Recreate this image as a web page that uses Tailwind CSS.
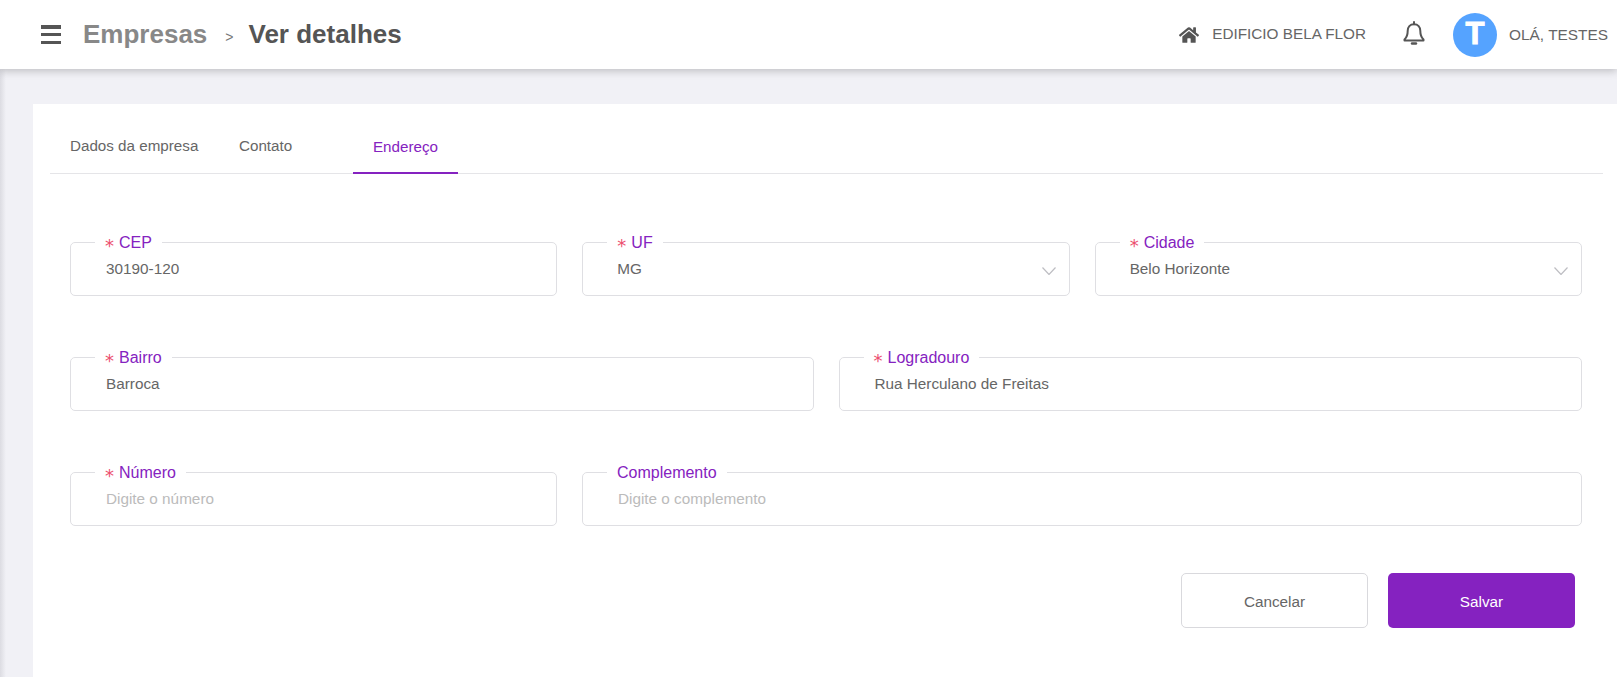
<!DOCTYPE html>
<html lang="en">

<head>
    <meta charset="UTF-8">
    <meta name="viewport" content="width=device-width, initial-scale=1.0">
    <title>Ver detalhes</title>
    <script src="https://cdn.jsdelivr.net/npm/@tailwindcss/browser@4"></script>
</head>

<body class="bg-[#f1f1f6] h-[677px] overflow-hidden flex flex-col font-['Liberation_Sans',Arial,sans-serif] text-[#666]">
    <!-- top bar -->
    <header class="relative z-10 h-[69px] shrink-0 bg-white shadow-[0_2px_8px_rgba(0,0,0,0.22)] flex items-center pl-[41px] pr-[9px]">
        <button class="w-5 h-[19px] flex flex-col justify-between mr-[22px]">
            <span class="block h-[3.5px] bg-[#555]"></span>
            <span class="block h-[3.5px] bg-[#555]"></span>
            <span class="block h-[3.5px] bg-[#555]"></span>
        </button>
        <span class="text-[26px] font-bold text-[#888]">Empresas</span>
        <span class="text-sm ml-[18px] mr-[15px] mt-[5px] text-[#777]">&gt;</span>
        <span class="text-[26px] font-bold text-[#555]">Ver detalhes</span>

        <div class="ml-auto flex items-center">
            <svg class="w-5 h-[18px] text-[#555] mr-[13px]" viewBox="0 0 576 512" fill="currentColor">
                <path d="M280.37 148.26L96 300.11V464a16 16 0 0 0 16 16l112.06-.29a16 16 0 0 0 15.92-16V368a16 16 0 0 1 16-16h64a16 16 0 0 1 16 16v95.64a16 16 0 0 0 16 16.05L464 480a16 16 0 0 0 16-16V300L295.67 148.26a12.19 12.19 0 0 0-15.3 0zM571.6 251.47L488 182.56V44.05a12 12 0 0 0-12-12h-56a12 12 0 0 0-12 12v72.61L318.47 43a48 48 0 0 0-61 0L4.34 251.47a12 12 0 0 0-1.6 16.9l25.5 31A12 12 0 0 0 45.15 301l235.22-193.74a12.19 12.19 0 0 1 15.3 0L530.9 301a12 12 0 0 0 16.9-1.6l25.5-31a12 12 0 0 0-1.7-16.93z"/>
            </svg>
            <span class="text-[15.3px]">EDIFICIO BELA FLOR</span>
            <svg class="w-[24px] h-[26px] text-[#555] ml-[36px] mr-[27px] mb-1" viewBox="0 0 24 26" fill="none" stroke="currentColor" stroke-width="2" stroke-linejoin="round" stroke-linecap="round">
                <path d="M12 2v2.2"/>
                <path d="M12 4.200c-4 0-6.300 3-6.300 6.600 0 4.600-1.200 7-3.200 8.700v1h19v-1c-2-1.700-3.200-4.100-3.200-8.700 0-3.600-2.300-6.600-6.300-6.600z"/>
                <path d="M10 23.500h4" stroke-width="2.400"/>
            </svg>
            <div class="w-11 h-11 rounded-full bg-[#55a3ff] text-white flex items-center justify-center text-[31px] font-bold [-webkit-text-stroke:1px_white] mr-3">T</div>
            <span class="text-[15.4px]">OLÁ, TESTES</span>
        </div>
    </header>

    <div class="flex-1 pt-[35px] pl-[33px] bg-gradient-to-r from-[#dcdce2] from-0% to-[#f1f1f6] to-[6px]">
        <main class="bg-white h-full pl-[17px] pr-[14px]">
            <!-- tabs -->
            <nav class="h-[70px] border-b border-[#e5e5e8] flex items-end text-[15.2px]">
                <a class="w-[180px] pl-5 pb-[15px]">Dados da empresa</a>
                <a class="w-[123px] pl-[9px] pb-[15px]">Contato</a>
                <a class="w-[105px] -mb-px h-[38px] text-center text-[#8522c0] border-b-2 border-[#8522c0]">Endereço</a>
            </nav>

            <form class="pl-5 pr-[21px]">
                <div class="grid grid-cols-3 gap-x-[25px] mt-[60px]">
                    <fieldset class="h-[62px] border border-[#dfdfe3] rounded-[5px] pl-[24px] pr-[12px]">
                        <legend class="h-[17px] px-[10px] text-base leading-[17px] text-[#8522c0]"><span class="inline-block align-top h-[17px] translate-y-[3px] mr-[5px] font-['DejaVu_Sans'] text-lg leading-[17px] text-[#ec4f6f]">*</span>CEP</legend>
                        <p class="text-[15.3px] leading-5 pl-[11px] pt-[8px]">30190-120</p>
                    </fieldset>
                    <fieldset class="h-[62px] border border-[#dfdfe3] rounded-[5px] pl-[24px] pr-[12px]">
                        <legend class="h-[17px] px-[10px] text-base leading-[17px] text-[#8522c0]"><span class="inline-block align-top h-[17px] translate-y-[3px] mr-[5px] font-['DejaVu_Sans'] text-lg leading-[17px] text-[#ec4f6f]">*</span>UF</legend>
                        <div class="flex items-center justify-between text-[15.3px] leading-5 pl-[10px] pt-[8px] pr-px">
                            <span>MG</span>
                            <svg class="w-[14px] h-2 mt-1" viewBox="0 0 14 8" fill="none" stroke="#bdbdc2" stroke-width="1.200"><path d="M.5.5 7 7.500 13.500.5"/></svg>
                        </div>
                    </fieldset>
                    <fieldset class="h-[62px] border border-[#dfdfe3] rounded-[5px] pl-[24px] pr-[12px]">
                        <legend class="h-[17px] px-[10px] text-base leading-[17px] text-[#8522c0]"><span class="inline-block align-top h-[17px] translate-y-[3px] mr-[5px] font-['DejaVu_Sans'] text-lg leading-[17px] text-[#ec4f6f]">*</span>Cidade</legend>
                        <div class="flex items-center justify-between text-[15.3px] leading-5 pl-[10px] pt-[8px] pr-px">
                            <span>Belo Horizonte</span>
                            <svg class="w-[14px] h-2 mt-1" viewBox="0 0 14 8" fill="none" stroke="#bdbdc2" stroke-width="1.200"><path d="M.5.5 7 7.500 13.500.5"/></svg>
                        </div>
                    </fieldset>
                </div>

                <div class="grid grid-cols-2 gap-x-[25px] mt-[53px]">
                    <fieldset class="h-[62px] border border-[#dfdfe3] rounded-[5px] pl-[24px] pr-[12px]">
                        <legend class="h-[17px] px-[10px] text-base leading-[17px] text-[#8522c0]"><span class="inline-block align-top h-[17px] translate-y-[3px] mr-[5px] font-['DejaVu_Sans'] text-lg leading-[17px] text-[#ec4f6f]">*</span>Bairro</legend>
                        <p class="text-[15.3px] leading-5 pl-[11px] pt-[8px]">Barroca</p>
                    </fieldset>
                    <fieldset class="h-[62px] border border-[#dfdfe3] rounded-[5px] pl-[24px] pr-[12px]">
                        <legend class="h-[17px] px-[10px] text-base leading-[17px] text-[#8522c0]"><span class="inline-block align-top h-[17px] translate-y-[3px] mr-[5px] font-['DejaVu_Sans'] text-lg leading-[17px] text-[#ec4f6f]">*</span>Logradouro</legend>
                        <p class="text-[15.3px] leading-5 pl-[11px] pt-[8px]">Rua Herculano de Freitas</p>
                    </fieldset>
                </div>

                <div class="grid grid-cols-[487px_1fr] gap-x-[25px] mt-[53px]">
                    <fieldset class="h-[62px] border border-[#dfdfe3] rounded-[5px] pl-[24px] pr-[12px]">
                        <legend class="h-[17px] px-[10px] text-base leading-[17px] text-[#8522c0]"><span class="inline-block align-top h-[17px] translate-y-[3px] mr-[5px] font-['DejaVu_Sans'] text-lg leading-[17px] text-[#ec4f6f]">*</span>Número</legend>
                        <p class="text-[15.3px] leading-5 pl-[11px] pt-[8px] text-[#bbb]">Digite o número</p>
                    </fieldset>
                    <fieldset class="h-[62px] border border-[#dfdfe3] rounded-[5px] pl-[24px] pr-[12px]">
                        <legend class="h-[17px] px-[10px] text-base leading-[17px] text-[#8522c0]">Complemento</legend>
                        <p class="text-[15.3px] leading-5 pl-[11px] pt-[8px] text-[#bbb]">Digite o complemento</p>
                    </fieldset>
                </div>

                <div class="flex justify-end gap-[20px] mt-[47px] pr-[7px]">
                    <button type="button" class="w-[187px] h-[55px] border border-[#d9d9dd] rounded-[5px] text-[15.3px] pt-1">Cancelar</button>
                    <button type="button" class="w-[187px] h-[55px] bg-[#8522c0] rounded-[5px] text-[15.3px] text-white pt-1">Salvar</button>
                </div>
            </form>
        </main>
    </div>
</body>

</html>
